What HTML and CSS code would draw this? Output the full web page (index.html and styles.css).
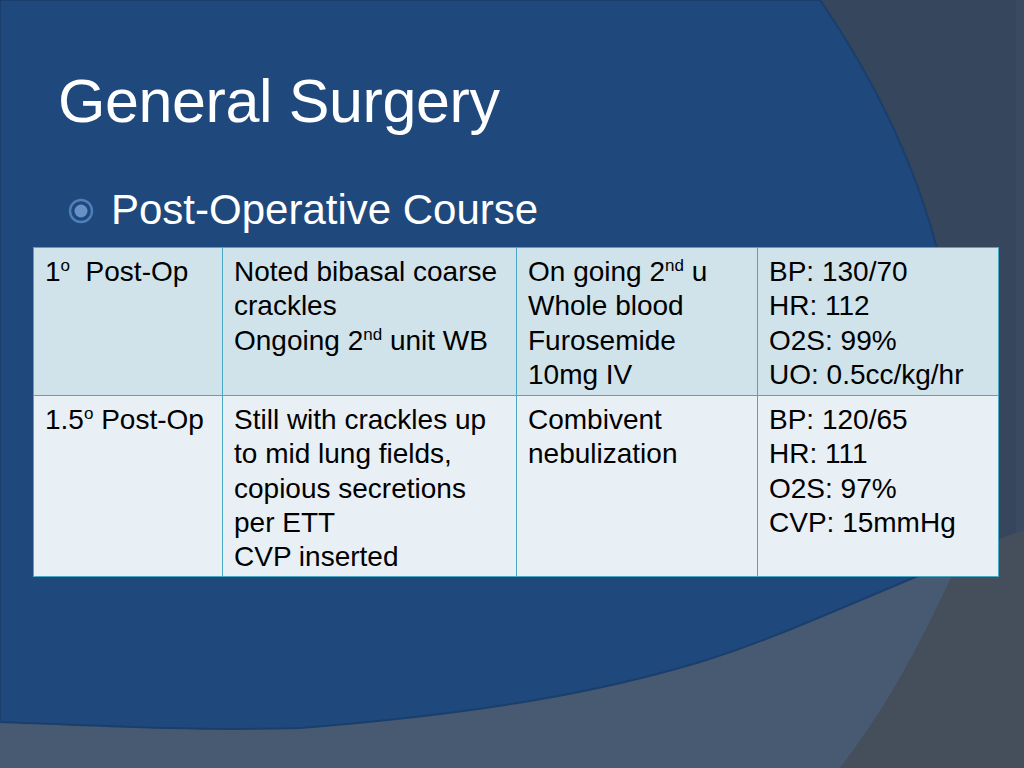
FILE: index.html
```html
<!DOCTYPE html>
<html lang="en">
<head>
<meta charset="utf-8">
<title>General Surgery</title>
<link rel="stylesheet" href="styles.css">
</head>
<body>
<div class="slide">
  <svg class="backdrop" width="1024" height="768" viewBox="0 0 1024 768" aria-hidden="true">
    <rect width="1024" height="768" fill="#35465d"/>
    <rect x="1016" y="0" width="8" height="768" fill="#3a4a61"/>
    <path d="M1024,530 L1024,768 L840,768 C875,710 905,650 933,577 C950,560 980,545 1024,530 Z" fill="#454e5b"/>
    <path d="M0,690 L960,560 C930,620 900,690 840,768 L0,768 Z" fill="#485a72"/>
    <path d="M0,0 L820,0 C882,90 935,200 954,330 C966,420 956,510 925,573 C820,617 760,644 700,662 C600,692 480,714 300,728 C200,731 100,726 0,722 Z" fill="#1f497d" stroke="#1a3f6c" stroke-width="2"/>
  </svg>
  <div class="content">
    <h1 class="title">General Surgery</h1>
    <div class="bullet">
      <svg class="bullet-icon" width="26" height="26" viewBox="0 0 26 26" aria-hidden="true">
        <circle cx="13" cy="13" r="11" fill="none" stroke="#4f7fb8" stroke-width="2.4"/>
        <circle cx="13" cy="13" r="6.5" fill="#6790c6"/>
      </svg>
      <span class="bullet-text">Post-Operative Course</span>
    </div>
    <table class="course">
      <colgroup>
        <col class="c1"><col class="c2"><col class="c3"><col class="c4">
      </colgroup>
      <tr class="row-a">
        <td>1<sup>o</sup>&nbsp; Post-Op</td>
        <td>Noted bibasal coarse crackles<br>Ongoing 2<sup>nd</sup> unit WB</td>
        <td>On going 2<sup>nd</sup> u<br>Whole blood<br>Furosemide<br>10mg IV</td>
        <td>BP: 130/70<br>HR: 112<br>O2S: 99%<br>UO: 0.5cc/kg/hr</td>
      </tr>
      <tr class="row-b">
        <td>1.5<sup>o</sup> Post-Op</td>
        <td>Still with crackles up to mid lung fields, copious secretions per ETT<br>CVP inserted</td>
        <td>Combivent nebulization</td>
        <td>BP: 120/65<br>HR: 111<br>O2S: 97%<br>CVP: 15mmHg</td>
      </tr>
    </table>
  </div>
</div>
</body>
</html>
```

FILE: styles.css
```css
html, body {
  margin: 0;
  padding: 0;
  background: #1f497d;
}

.slide {
  position: relative;
  width: 1024px;
  height: 768px;
  overflow: hidden;
  font-family: "Liberation Sans", Arial, sans-serif;
}

.backdrop {
  position: absolute;
  left: 0;
  top: 0;
  display: block;
}

.content {
  position: relative;
  padding: 71px 0 0 33px;
}

.title {
  margin: 0 0 0 25px;
  font-size: 61px;
  line-height: 60px;
  font-weight: normal;
  color: #ffffff;
  letter-spacing: -0.4px;
}

.bullet {
  display: flex;
  align-items: center;
  gap: 17px;
  margin: 58px 0 0 35px;
  height: 42px;
}

.bullet-icon {
  display: block;
  flex: none;
  margin-top: 2px;
}

.bullet-text {
  font-size: 42px;
  line-height: 42px;
  color: #ffffff;
}

.course {
  margin-top: 16px;
  width: 965px;
  border-collapse: collapse;
  table-layout: fixed;
  font-size: 28px;
  line-height: 34.3px;
  color: #000000;
}

.course .c1 { width: 189px; }
.course .c2 { width: 294px; }
.course .c3 { width: 241px; }
.course .c4 { width: 241px; }

.course td {
  border: 1px solid #4aa8c4;
  padding: 7px 10px 2px 11px;
  vertical-align: top;
}

.row-a { height: 148px; }
.row-a td { background: #d0e3ea; }

.row-b { height: 181px; }
.row-b td { background: #e8eff5; }

.course sup {
  font-size: 17px;
  line-height: 0;
  vertical-align: 10px;
}
```
